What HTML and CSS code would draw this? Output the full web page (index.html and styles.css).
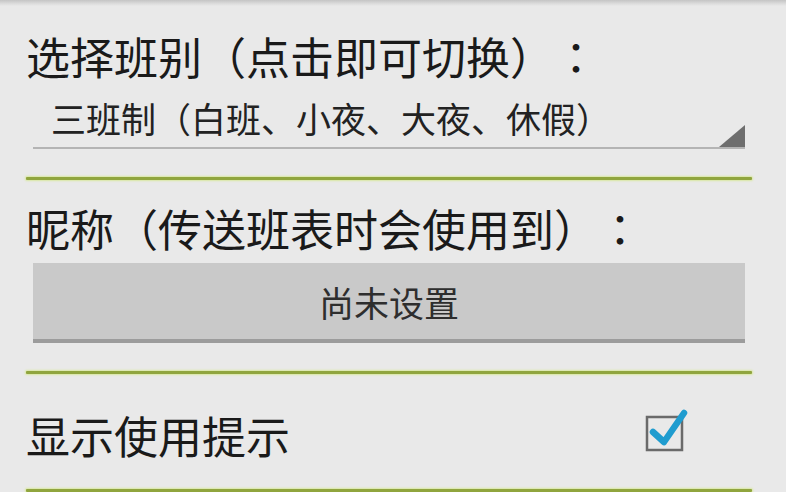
FILE: index.html
```html
<!DOCTYPE html>
<html lang="zh-CN">
<head>
<meta charset="utf-8">
<title>设置</title>
<link rel="stylesheet" href="styles.css">
</head>
<body>
<div class="topshade"></div>
<div class="content">
  <div class="label label-first">选择班别<span class="p" lang="zh-TW">（</span>点击即可切换<span class="p" lang="zh-TW">）</span><span class="p" lang="zh-TW">：</span></div>
  <div class="spinner">
    <span class="spinner-text">三班制<span class="p" lang="zh-TW">（</span>白班、小夜、大夜、休假<span class="p" lang="zh-TW">）</span></span>
    <svg class="spinner-arrow" width="26" height="22" viewBox="0 0 26 22"><polygon points="26,0 26,22 0,22" fill="#6e6e6e"/></svg>
  </div>
  <div class="divider"></div>
  <div class="label label-second">昵称<span class="p" lang="zh-TW">（</span>传送班表时会使用到<span class="p" lang="zh-TW">）</span><span class="p" lang="zh-TW">：</span></div>
  <div class="button">尚未设置</div>
  <div class="divider"></div>
  <div class="row">
    <span class="row-text">显示使用提示</span>
    <svg class="check" width="44" height="44" viewBox="0 0 44 44">
      <rect x="3" y="9" width="35" height="33" fill="none" stroke="#6a6a6a" stroke-width="2.5"/>
      <path d="M9 24 L20 34 L40 5" fill="none" stroke="#1f9ccf" stroke-width="6.5" stroke-linecap="round" stroke-linejoin="round"/>
    </svg>
  </div>
  <div class="divider divider-last"></div>
</div>
</body>
</html>
```

FILE: styles.css
```css
html, body {
  margin: 0;
  padding: 0;
}
body {
  background: #e9e9e9;
  font-family: "Noto Sans CJK SC", "Noto Sans", sans-serif;
  color: #1c1c1c;
  width: 786px;
  height: 492px;
  overflow: hidden;
  text-spacing-trim: space-all;
  font-feature-settings: "chws" 0, "halt" 0;
}
.p {
  font-family: "Noto Sans CJK TC", "Noto Sans CJK SC", sans-serif;
  display: inline-block;
  width: 1em;
  text-align: center;
}
.topshade {
  height: 6px;
  background: linear-gradient(#c4c4c4, #d8d8d8 3px, #e9e9e9);
}
.content {
  padding-left: 26px;
  width: 726px;
}
.label {
  font-size: 44px;
  line-height: 50px;
  height: 50px;
  white-space: nowrap;
  color: #1a1a1a;
}
.label-first {
  margin-top: 25px;
}
.label-second {
  margin-top: 23px;
}
.spinner {
  margin-top: 11px;
  margin-left: 7px;
  width: 712px;
  height: 55px;
  border-bottom: 2px solid #b4b4b4;
  display: flex;
  align-items: flex-end;
}
.spinner-text {
  align-self: center;
  margin-bottom: 4px;
  padding-left: 18px;
  font-size: 35px;
  line-height: 50px;
  color: #222;
  white-space: nowrap;
}
.spinner-arrow {
  margin-left: auto;
  display: block;
}
.divider {
  margin-top: 28px;
  height: 3px;
  background: #90a53e;
  box-shadow: 0 0 2px 1px #d9e8a0;
  border-radius: 1px;
}
.divider-last {
  margin-top: 29px;
}
.button {
  margin-top: 10px;
  margin-left: 7px;
  width: 712px;
  height: 76px;
  background: #c9c9c9;
  border-bottom: 4px solid #9c9c9c;
  display: flex;
  align-items: center;
  justify-content: center;
  font-size: 35px;
  color: #2e2e2e;
}
.row {
  margin-top: 36px;
  height: 50px;
  display: flex;
  align-items: center;
  justify-content: space-between;
  padding-right: 64px;
}
.row-text {
  font-size: 44px;
  line-height: 50px;
  color: #1a1a1a;
}
.check {
  display: block;
  margin-top: -10px;
}
```
